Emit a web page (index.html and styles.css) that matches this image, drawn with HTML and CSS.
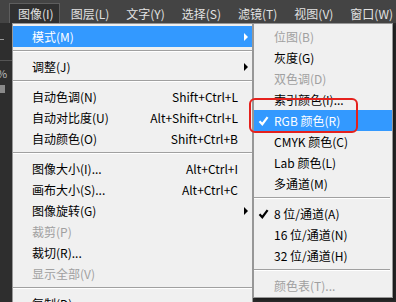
FILE: index.html
```html
<!DOCTYPE html>
<html lang="zh-CN">

<head>
    <meta charset="UTF-8">
    <title>图像 - 模式</title>
    <link rel="stylesheet" href="styles.css">
</head>

<body>
    <div class="menubar">
        <span class="bar-item active">图像(I)</span>
        <span class="bar-item">图层(L)</span>
        <span class="bar-item">文字(Y)</span>
        <span class="bar-item">选择(S)</span>
        <span class="bar-item">滤镜(T)</span>
        <span class="bar-item">视图(V)</span>
        <span class="bar-item">窗口(W)</span>
    </div>

    <div class="workspace">
        <div class="side-panel">
            <span class="side-dash"></span>
            <span class="side-line"></span>
            <span class="side-pct">%</span>
            <span class="side-box"></span>
        </div>

        <div class="menu main-menu">
            <div class="item hover"><span class="label">模式(M)</span><span class="arrow"></span></div>
            <div class="sep"></div>
            <div class="item"><span class="label">调整(J)</span><span class="arrow"></span></div>
            <div class="sep"></div>
            <div class="item"><span class="label">自动色调(N)</span><span class="key">Shift+Ctrl+L</span><span class="arrow-cell"></span></div>
            <div class="item"><span class="label">自动对比度(U)</span><span class="key">Alt+Shift+Ctrl+L</span><span class="arrow-cell"></span></div>
            <div class="item"><span class="label">自动颜色(O)</span><span class="key">Shift+Ctrl+B</span><span class="arrow-cell"></span></div>
            <div class="sep"></div>
            <div class="item"><span class="label">图像大小(I)...</span><span class="key">Alt+Ctrl+I</span><span class="arrow-cell"></span></div>
            <div class="item"><span class="label">画布大小(S)...</span><span class="key">Alt+Ctrl+C</span><span class="arrow-cell"></span></div>
            <div class="item"><span class="label">图像旋转(G)</span><span class="arrow"></span></div>
            <div class="item disabled"><span class="label">裁剪(P)</span></div>
            <div class="item"><span class="label">裁切(R)...</span></div>
            <div class="item disabled"><span class="label">显示全部(V)</span></div>
            <div class="sep"></div>
            <div class="item"><span class="label">复制(D)...</span></div>
        </div>

        <div class="menu sub-menu">
            <div class="item disabled"><span class="check"></span><span class="label">位图(B)</span></div>
            <div class="item"><span class="check"></span><span class="label">灰度(G)</span></div>
            <div class="item disabled"><span class="check"></span><span class="label">双色调(D)</span></div>
            <div class="item"><span class="check"></span><span class="label">索引颜色(I)...</span></div>
            <div class="item hover">
                <span class="check">
                    <svg width="11" height="10" viewBox="0 0 11 10"><path d="M1.5 5.2 L4.3 8.2 L9.6 1.2" fill="none" stroke="#fff" stroke-width="2.2"/></svg>
                </span><span class="label">RGB 颜色(R)</span>
            </div>
            <div class="item"><span class="check"></span><span class="label">CMYK 颜色(C)</span></div>
            <div class="item"><span class="check"></span><span class="label">Lab 颜色(L)</span></div>
            <div class="item"><span class="check"></span><span class="label">多通道(M)</span></div>
            <div class="sep"></div>
            <div class="item">
                <span class="check">
                    <svg width="11" height="10" viewBox="0 0 11 10"><path d="M1.5 5.2 L4.3 8.2 L9.6 1.2" fill="none" stroke="#000" stroke-width="2.2"/></svg>
                </span><span class="label">8 位/通道(A)</span>
            </div>
            <div class="item"><span class="check"></span><span class="label">16 位/通道(N)</span></div>
            <div class="item"><span class="check"></span><span class="label">32 位/通道(H)</span></div>
            <div class="sep"></div>
            <div class="item disabled"><span class="check"></span><span class="label">颜色表(T)...</span></div>
        </div>

        <div class="mark"></div>
    </div>
</body>

</html>
```

FILE: styles.css
```css
body {
    margin: 0;
    width: 396px;
    height: 302px;
    overflow: hidden;
    background: #2a2a2a;
    font-family: "Noto Sans CJK SC", "Noto Sans", sans-serif;
    font-size: 12px;
}

.menubar {
    height: 23px;
    background: #444444;
    display: flex;
    align-items: flex-end;
    padding-left: 9px;
    box-sizing: border-box;
    overflow: hidden;
}

.bar-item {
    flex-shrink: 0;
    white-space: nowrap;
    height: 20px;
    line-height: 19px;
    padding: 0 5px 0 8px;
    color: #e2e2e2;
    box-sizing: border-box;
    border: 1px solid transparent;
    border-bottom: none;
}

.bar-item + .bar-item {
    margin-left: 2px;
}

.bar-item.active {
    background: #303030;
    border-color: #5e5e5e;
}

.workspace {
    position: relative;
    display: flex;
    height: 279px;
    overflow: hidden;
}

.side-panel {
    width: 12px;
    background: #2e2e2e;
    display: flex;
    flex-direction: column;
    overflow: hidden;
}

.side-dash {
    margin-top: 16px;
    width: 4px;
    height: 1px;
    background: #9a9a9a;
}

.side-line {
    margin-top: 20px;
    height: 1px;
    background: #555;
}

.side-pct {
    margin-top: 6px;
    margin-left: -3px;
    color: #bbb;
    font-size: 11px;
    line-height: 12px;
}

.side-box {
    margin-top: 6px;
    width: 5px;
    height: 8px;
    background: #8a8a8a;
}

.menu {
    background: #f0f0f0;
    border: 1px solid #979797;
    padding-top: 2px;
    box-sizing: border-box;
}

.main-menu {
    width: 241px;
    height: 300px;
    flex-shrink: 0;
}

.sub-menu {
    position: absolute;
    left: 253px;
    top: 0;
    width: 140px;
    padding-bottom: 1px;
    box-shadow: 2px 2px 2px rgba(0, 0, 0, 0.35);
}

.item {
    display: flex;
    align-items: center;
    height: 21px;
    color: #000;
    white-space: nowrap;
}

.main-menu .item {
    padding-left: 19px;
}

.item .label {
    flex: 1;
}

.item.hover {
    background: #3399ff;
    color: #fff;
}

.item.disabled {
    color: #a0a0a0;
}

.key {
    text-align: right;
}

.arrow-cell,
.arrow {
    width: 14px;
    height: 8px;
    flex-shrink: 0;
    position: relative;
}

.arrow::after {
    content: "";
    position: absolute;
    left: 6px;
    top: 0;
    border-top: 4px solid transparent;
    border-bottom: 4px solid transparent;
    border-left: 4px solid #000;
}

.item.hover .arrow::after {
    border-left-color: #fff;
}

.sep {
    height: 1px;
    margin: 3px 0 4px;
    background: #a0a0a0;
    border-bottom: 1px solid #fff;
}

.sub-menu .sep {
    margin-right: 2px;
}

.check {
    width: 20px;
    height: 10px;
    display: flex;
    padding-left: 4px;
    box-sizing: border-box;
}

.mark {
    position: absolute;
    left: 249px;
    top: 75px;
    width: 105px;
    height: 31px;
    border: 2px solid #e5211d;
    border-radius: 6px;
}
```
